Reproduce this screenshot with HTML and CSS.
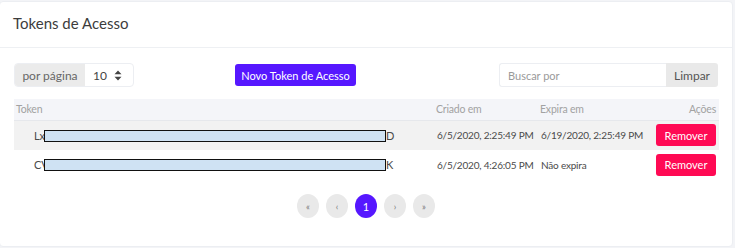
FILE: index.html
```html
<!DOCTYPE html>
<html lang="pt-BR">

<head>
  <meta charset="UTF-8">
  <title>Tokens de Acesso</title>
  <link rel="stylesheet" href="styles.css">
</head>

<body>

  <div class="card">
    <div class="card-header">Tokens de Acesso</div>

    <div class="card-body">
      <!-- Toolbar -->
      <div class="toolbar">
        <div class="per-page">
          <span class="per-page-label">por página</span>
          <span class="per-page-select">10
            <svg width="8" height="11" viewBox="0 0 8 11"><path d="M4 0.5 L7.5 4.2 H0.5 Z M4 10.5 L7.5 6.8 H0.5 Z" fill="#444"/></svg>
          </span>
        </div>
        <button class="btn-new">Novo Token de Acesso</button>
        <div class="search">
          <input class="search-input" type="text" placeholder="Buscar por">
          <button class="btn-clear">Limpar</button>
        </div>
      </div>

      <!-- Table -->
      <table class="tokens">
        <tr>
          <th class="col-token">Token</th>
          <th class="col-date">Criado em</th>
          <th class="col-exp">Expira em</th>
          <th class="col-act">Ações</th>
        </tr>
        <tr class="striped">
          <td class="token-cell"><span class="token-start">Lx</span><span class="redact"></span>D</td>
          <td>6/5/2020, 2:25:49 PM</td>
          <td>6/19/2020, 2:25:49 PM</td>
          <td class="col-act"><button class="btn-remove">Remover</button></td>
        </tr>
        <tr>
          <td class="token-cell"><span class="token-start">CV</span><span class="redact"></span>K</td>
          <td>6/5/2020, 4:26:05 PM</td>
          <td>Não expira</td>
          <td class="col-act"><button class="btn-remove">Remover</button></td>
        </tr>
      </table>

      <!-- Pagination -->
      <div class="pager">
        <span class="page">«</span>
        <span class="page">‹</span>
        <span class="page active">1</span>
        <span class="page">›</span>
        <span class="page">»</span>
      </div>
    </div>
  </div>

</body>

</html>
```

FILE: styles.css
```css
/* Global */
* {
  margin: 0;
  padding: 0;
  box-sizing: border-box;
  font-family: 'Lato', 'Open Sans', sans-serif;
}

body {
  background: #f3f4f7;
  width: 735px;
  height: 248px;
  overflow: hidden;
}

/* Card */
.card {
  margin: 1px 2px 0 -1px;
  height: 246px;
  background: #fff;
  border: 1px solid #eceef2;
  border-radius: 4px;
}

.card-header {
  height: 46px;
  padding: 12px 13px 0;
  font-size: 15px;
  color: #3c3c3c;
  border-bottom: 1px solid #eef0f3;
}

.card-body {
  padding: 15px 14px 0 14px;
}

/* Toolbar */
.toolbar {
  display: flex;
  align-items: center;
  height: 24px;
}

.per-page {
  display: flex;
  height: 24px;
  width: 120px;
  border: 1px solid #eceef2;
  border-radius: 4px;
  overflow: hidden;
  font-size: 12px;
  color: #555;
}

.per-page-label {
  display: flex;
  align-items: center;
  justify-content: center;
  width: 70px;
  background: #ebebeb;
  color: #666;
}

.per-page-select {
  display: flex;
  align-items: center;
  justify-content: space-between;
  flex: 1;
  padding: 0 11px 0 8px;
  color: #444;
}

.btn-new {
  margin-left: 101px;
  width: 121px;
  height: 22px;
  background: #5617ff;
  color: #fff;
  border: none;
  border-radius: 3px;
  font-size: 11px;
}

.search {
  display: flex;
  margin-left: auto;
  height: 24px;
}

.search-input {
  width: 167px;
  height: 24px;
  border: 1px solid #eceef2;
  border-right: none;
  border-radius: 3px 0 0 3px;
  padding: 0 8px;
  font-size: 11px;
  outline: none;
}

.search-input::placeholder {
  color: #9a9a9a;
}

.btn-clear {
  width: 52px;
  height: 24px;
  background: #e9e9e9;
  color: #555;
  border: none;
  border-radius: 0 3px 3px 0;
  font-size: 12px;
}

/* Table */
.tokens {
  width: 705px;
  margin-top: 12px;
  border-collapse: collapse;
  table-layout: fixed;
  font-size: 10px;
  letter-spacing: -0.2px;
  color: #4a4a4a;
}

.tokens th {
  height: 21px;
  background: #f4f5f9;
  color: #a2a2a2;
  font-weight: normal;
  font-size: 10.5px;
  text-align: left;
  padding: 0 3px 0 2px;
  border-bottom: 1px solid #e6e8ec;
}

.tokens td {
  height: 29px;
  padding: 0 3px;
  white-space: nowrap;
}

.tokens .striped td {
  background: #f2f2f2;
  height: 30px;
}

.col-token {
  width: 420px;
}

.col-date {
  width: 104px;
}

.col-exp {
  width: 113px;
}

.col-act {
  width: 68px;
}

.tokens .col-act {
  text-align: right;
  padding-right: 3px;
}

.tokens .token-cell {
  padding-left: 20px;
  font-size: 11px;
}

/* the redaction box sits over the end of the token prefix */
.token-start {
  display: inline-block;
  width: 10px;
  white-space: nowrap;
}

.redact {
  display: inline-block;
  width: 342px;
  height: 12px;
  vertical-align: -2px;
  background: #cfe2f3;
  border: 1px solid #111;
}

.btn-remove {
  width: 60px;
  height: 22px;
  background: #ff0a54;
  color: #fff;
  border: none;
  border-radius: 3px;
  font-size: 11px;
  letter-spacing: 0;
}

/* Pagination */
.pager {
  display: flex;
  justify-content: center;
  gap: 7px;
  margin-top: 15px;
}

.page {
  display: flex;
  align-items: center;
  justify-content: center;
  width: 22px;
  height: 24px;
  border-radius: 50%;
  background: #e9e9e9;
  color: #777;
  font-size: 9px;
}

.page.active {
  background: #5617ff;
  color: #fff;
  font-size: 11px;
}
```
